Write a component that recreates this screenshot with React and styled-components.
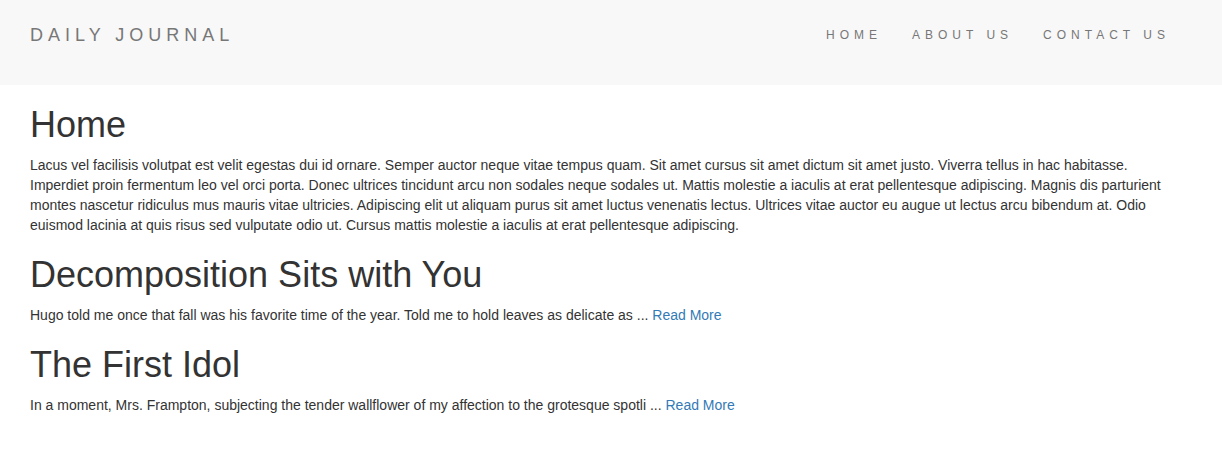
import React from 'react';
import styled, { createGlobalStyle } from 'styled-components';

const GlobalStyle = createGlobalStyle`
  *, *::before, *::after { box-sizing: border-box; }
  body {
    margin: 0;
    background: #fff;
    color: #333;
    font-family: "Helvetica Neue", Helvetica, Arial, "Liberation Sans", sans-serif;
    font-size: 14px;
    line-height: 20px;
  }
`;

const Navbar = styled.nav`
  display: flex;
  justify-content: space-between;
  align-items: flex-start;
  padding: 10px 37px 25px 30px;
  background: #f8f8f8;
`;

const Brand = styled.a`
  padding: 15px 0;
  color: #777;
  font-size: 18px;
  letter-spacing: 5px;
  text-decoration: none;
`;

const NavList = styled.ul`
  display: flex;
  margin: 0;
  padding: 0;
  list-style: none;
`;

const NavLink = styled.a`
  display: block;
  padding: 15px;
  color: #777;
  font-size: 12px;
  letter-spacing: 5px;
  text-decoration: none;
`;

const Content = styled.main`
  padding: 20px 45px 20px 30px;
`;

const Title = styled.h1`
  margin: 0 0 10px;
  font-size: 36px;
  font-weight: 500;
  line-height: 40px;
`;

const Text = styled.p`
  margin: 0 0 20px;
`;

const ReadMore = styled.a`
  color: #337ab7;
  text-decoration: none;
`;

const links = ['HOME', 'ABOUT US', 'CONTACT US'];

const posts = [
  {
    title: 'Decomposition Sits with You',
    excerpt: 'Hugo told me once that fall was his favorite time of the year. Told me to hold leaves as delicate as ...',
  },
  {
    title: 'The First Idol',
    excerpt: 'In a moment, Mrs. Frampton, subjecting the tender wallflower of my affection to the grotesque spotli ...',
  },
];

export default function App() {
  return (
    <>
      <GlobalStyle />
      <Navbar>
        <Brand href="#">DAILY JOURNAL</Brand>
        <NavList>
          {links.map((label) => (
            <li key={label}>
              <NavLink href="#">{label}</NavLink>
            </li>
          ))}
        </NavList>
      </Navbar>
      <Content>
        <Title>Home</Title>
        <Text>
          Lacus vel facilisis volutpat est velit egestas dui id ornare. Semper auctor neque vitae tempus quam. Sit amet
          cursus sit amet dictum sit amet justo. Viverra tellus in hac habitasse. Imperdiet proin fermentum leo vel orci
          porta. Donec ultrices tincidunt arcu non sodales neque sodales ut. Mattis molestie a iaculis at erat
          pellentesque adipiscing. Magnis dis parturient montes nascetur ridiculus mus mauris vitae ultricies.
          Adipiscing elit ut aliquam purus sit amet luctus venenatis lectus. Ultrices vitae auctor eu augue ut lectus
          arcu bibendum at. Odio euismod lacinia at quis risus sed vulputate odio ut. Cursus mattis molestie a iaculis
          at erat pellentesque adipiscing.
        </Text>
        {posts.map((post) => (
          <article key={post.title}>
            <Title>{post.title}</Title>
            <Text>
              {post.excerpt} <ReadMore href="#">Read More</ReadMore>
            </Text>
          </article>
        ))}
      </Content>
    </>
  );
}
